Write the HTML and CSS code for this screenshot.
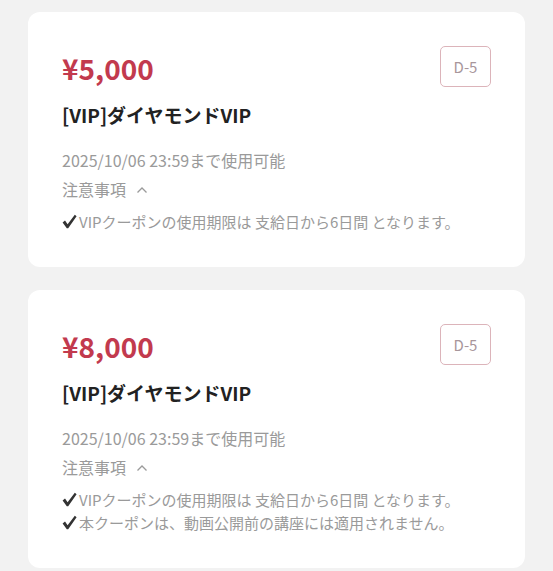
FILE: index.html
```html
<!DOCTYPE html>
<html>
<head>
    <title>クーポン</title>
    <link rel="stylesheet" href="styles.css">
</head>
<body>
    <div class="coupon-list">
        <div class="coupon">
            <div class="coupon-head">
                <div class="price">¥5,000</div>
                <div class="dday">D-5</div>
            </div>
            <div class="name">[VIP]ダイヤモンドVIP</div>
            <div class="expire">2025/10/06 23:59まで使用可能</div>
            <div class="notice-toggle">注意事項
                <svg class="chevron" width="12" height="8" viewBox="0 0 12 8"><polyline points="1.5,6.5 6,2 10.5,6.5" fill="none" stroke="#9a9a9a" stroke-width="1.3"/></svg>
            </div>
            <ul class="notes">
                <li><svg class="check" width="15" height="15" viewBox="0 0 15 15"><path d="M0.6 8.4 L3 6.6 L5.6 10.2 L12.8 0.8 L14.6 2.2 L6.2 14.2 L4.8 14.2 Z" fill="#333"/></svg>VIPクーポンの使用期限は 支給日から6日間 となります。</li>
            </ul>
        </div>

        <div class="coupon">
            <div class="coupon-head">
                <div class="price">¥8,000</div>
                <div class="dday">D-5</div>
            </div>
            <div class="name">[VIP]ダイヤモンドVIP</div>
            <div class="expire">2025/10/06 23:59まで使用可能</div>
            <div class="notice-toggle">注意事項
                <svg class="chevron" width="12" height="8" viewBox="0 0 12 8"><polyline points="1.5,6.5 6,2 10.5,6.5" fill="none" stroke="#9a9a9a" stroke-width="1.3"/></svg>
            </div>
            <ul class="notes">
                <li><svg class="check" width="15" height="15" viewBox="0 0 15 15"><path d="M0.6 8.4 L3 6.6 L5.6 10.2 L12.8 0.8 L14.6 2.2 L6.2 14.2 L4.8 14.2 Z" fill="#333"/></svg>VIPクーポンの使用期限は 支給日から6日間 となります。</li>
                <li><svg class="check" width="15" height="15" viewBox="0 0 15 15"><path d="M0.6 8.4 L3 6.6 L5.6 10.2 L12.8 0.8 L14.6 2.2 L6.2 14.2 L4.8 14.2 Z" fill="#333"/></svg>本クーポンは、動画公開前の講座には適用されません。</li>
            </ul>
        </div>
    </div>
</body>
</html>
```

FILE: styles.css
```css
body {
    margin: 0;
    background-color: #f2f2f2;
    font-family: "Noto Sans CJK JP", "Noto Sans", sans-serif;
}
.coupon-list {
    display: flex;
    flex-direction: column;
    gap: 23px;
    padding: 12px 28px 0 28px;
}
.coupon {
    background-color: #fff;
    border-radius: 12px;
    padding: 34px;
}
.coupon-head {
    display: flex;
    justify-content: space-between;
    align-items: flex-start;
}
.price {
    font-size: 28px;
    font-weight: bold;
    color: #c23a4e;
    line-height: 44px;
}
.dday {
    width: 49px;
    height: 39px;
    border: 1px solid #dcb4ba;
    border-radius: 5px;
    color: #a8969b;
    font-size: 15px;
    display: flex;
    align-items: center;
    justify-content: center;
}
.name {
    font-size: 19px;
    font-weight: bold;
    color: #222;
    line-height: 46px;
    margin-top: 2px;
}
.expire {
    font-size: 16px;
    color: #9a9a9a;
    line-height: 29px;
    margin-top: 8px;
}
.notice-toggle {
    font-size: 16px;
    color: #9a9a9a;
    line-height: 29px;
    display: flex;
    align-items: center;
    gap: 10px;
}
.notes {
    list-style: none;
    margin: 6px 0 0 0;
    padding: 0;
    font-size: 15px;
    color: #9a9a9a;
    line-height: 23px;
}
.notes li {
    display: flex;
    align-items: center;
}
.check {
    margin-right: 2px;
    flex-shrink: 0;
}
```
